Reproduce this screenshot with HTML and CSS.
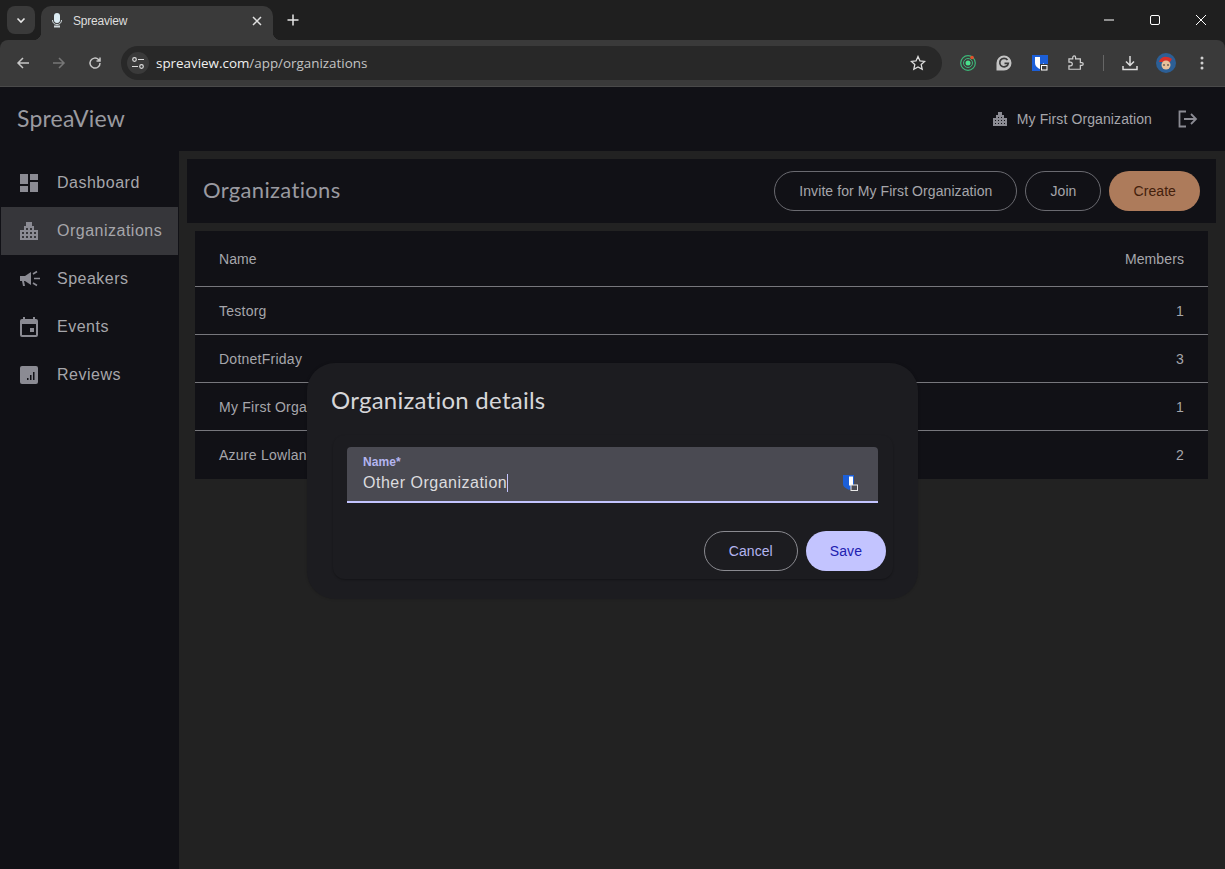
FILE: index.html
```html
<!DOCTYPE html>
<html lang="en">
<head>
    <meta charset="UTF-8">
    <title>Spreaview</title>
    <link rel="stylesheet" href="styles.css">
</head>
<body>
    <div class="browser">
        <div class="tabstrip">
            <div class="tab-search">
                <svg width="12" height="12" viewBox="0 0 12 12"><path d="M2.5 4.5 6 8l3.5-3.5" fill="none" stroke="#e6e6e6" stroke-width="1.6"/></svg>
            </div>
            <div class="tab">
                <svg class="tab-favicon" width="12" height="16" viewBox="0 0 12 16"><rect x="3" y="0" width="6" height="10" rx="3" fill="#dcecf4"/><path d="M1.5 7c0 3 2 4.500 4.500 4.500S10.500 10 10.500 7" fill="none" stroke="#cfd8dc"/><rect x="3" y="12.500" width="6" height="2" fill="#cfd8dc"/></svg>
                <span class="tab-title">Spreaview</span>
                <svg class="tab-close" width="10" height="10" viewBox="0 0 10 10"><path d="M1 1l8 8M9 1l-8 8" stroke="#e0e0e0" stroke-width="1.5"/></svg>
            </div>
            <svg class="new-tab" width="12" height="12" viewBox="0 0 12 12"><path d="M6 .5v11M.5 6h11" stroke="#e6e6e6" stroke-width="1.5"/></svg>
            <div class="window-controls">
                <svg width="10" height="10" viewBox="0 0 10 10"><path d="M0 5h10" stroke="#fff"/></svg>
                <svg width="10" height="10" viewBox="0 0 10 10"><rect x=".5" y=".5" width="9" height="9" rx="1.500" fill="none" stroke="#fff"/></svg>
                <svg width="10" height="10" viewBox="0 0 10 10"><path d="M0 0l10 10M10 0L0 10" stroke="#fff"/></svg>
            </div>
        </div>
        <div class="toolbar">
            <svg class="nav-icon" width="14" height="14" viewBox="0 0 14 14"><path d="M13 7H2M7 2 2 7l5 5" fill="none" stroke="#c7c7c7" stroke-width="1.500"/></svg>
            <svg class="nav-icon" width="14" height="14" viewBox="0 0 14 14"><path d="M1 7h11M7 2l5 5-5 5" fill="none" stroke="#777" stroke-width="1.500"/></svg>
            <svg class="nav-icon" width="14" height="14" viewBox="0 0 14 14"><path d="M12 7a5 5 0 1 1-1.500-3.500L12 5M12 1.500V5H8.500" fill="none" stroke="#c7c7c7" stroke-width="1.500"/></svg>
            <div class="omnibox">
                <div class="site-info">
                    <svg width="14" height="14" viewBox="0 0 14 14" fill="none" stroke="#dcdcdc" stroke-width="1.200"><circle cx="3.500" cy="3.500" r="1.800"/><path d="M7 3.500h6M1 10.500h6"/><circle cx="10.500" cy="10.500" r="1.800"/></svg>
                </div>
                <div class="url"><span class="url-host">spreaview.com</span>/app/organizations</div>
                <svg class="star" width="16" height="16" viewBox="0 0 16 16"><path d="M8 1.500l2 4.400 4.700.5-3.500 3.200 1 4.700L8 11.900l-4.200 2.400 1-4.700L1.300 6.400 6 5.900z" fill="none" stroke="#dedede" stroke-width="1.300"/></svg>
            </div>
            <div class="extensions">
                <svg width="16" height="16" viewBox="0 0 16 16" fill="none"><circle cx="8" cy="8" r="7.300" stroke="#3cb878" stroke-width="1.200"/><circle cx="8" cy="8" r="4.500" stroke="#3cb878"/><circle cx="8" cy="8" r="2.500" fill="#4be08c"/><circle cx="12" cy="2.500" r="1.800" fill="#e2522c"/></svg>
                <svg width="16" height="16" viewBox="0 0 16 16" fill="none"><path d="M8 .5a7.500 7.500 0 1 1 0 15H.5V8A7.500 7.500 0 0 1 8 .5z" fill="#c4c4c4"/><path d="M11.500 5A4.300 4.300 0 1 0 12.300 8.300H8.500" stroke="#3a3a3a" stroke-width="1.700"/></svg>
                <svg width="16" height="16" viewBox="0 0 16 16"><path d="M0 0h16v16H0z" fill="#1c5fd8"/><path d="M3 2h9v6c0 3-2 4.500-4.500 6C5 12.500 3 11 3 8z" fill="#fff"/><path d="M8 2h4v6l-4 3z" fill="#1c5fd8"/><rect x="8" y="9" width="8" height="7" fill="#3a3a3a"/><rect x="9.500" y="10.500" width="5.500" height="4.500" fill="none" stroke="#fff"/></svg>
                <svg width="16" height="16" viewBox="0 0 16 16"><path d="M1 4h4V2.500a1.500 1.500 0 0 1 3 0V4h5v4h1.500a1.500 1.500 0 0 1 0 3H13v4H1v-3.500h1.500a1.500 1.500 0 0 0 0-4H1z" fill="none" stroke="#d0d0d0" stroke-width="1.300" transform="scale(.95)"/></svg>
            </div>
            <div class="toolbar-sep"></div>
            <svg class="download" width="16" height="16" viewBox="0 0 16 16"><path d="M8 1v9M4 6.500 8 10.500l4-4M1 11v3.500h14V11" fill="none" stroke="#dcdcdc" stroke-width="1.500"/></svg>
            <svg class="avatar" width="20" height="20" viewBox="0 0 20 20"><circle cx="10" cy="10" r="10" fill="#2c5f96"/><path d="M3 9c1-5 7-7 13-3l-2 3z" fill="#d5302a"/><circle cx="10" cy="12" r="4.500" fill="#e8c09a"/><path d="M7 12h2M11 12h2" stroke="#333"/></svg>
            <svg class="menu" width="4" height="14" viewBox="0 0 4 14"><circle cx="2" cy="2" r="1.500" fill="#d0d0d0"/><circle cx="2" cy="7" r="1.500" fill="#d0d0d0"/><circle cx="2" cy="12" r="1.500" fill="#d0d0d0"/></svg>
        </div>
    </div>

    <div class="app">
        <header class="app-header">
            <div class="brand">SpreaView</div>
            <div class="org-switch">
                <svg width="14" height="14" viewBox="0 0 14 14"><path d="M0 14V6h3V3h2V0h4v3h2v3h3v8z" fill="#8b8b93"/><path d="M2 8h1v1H2zM2 11h1v1H2zM5 5h1v1H5zM8 5h1v1H8zM5 8h1v1H5zM8 8h1v1H8zM11 8h1v1h-1zM5 11h1v1H5zM8 11h1v1H8zM11 11h1v1h-1z" fill="#111116"/></svg>
                <span>My First Organization</span>
            </div>
            <svg class="logout" width="20" height="18" viewBox="0 0 20 18"><path d="M8 1.500H1.500v15H8M6 9h12M13 4l5 5-5 5" fill="none" stroke="#8b8b93" stroke-width="1.800"/></svg>
        </header>
        <div class="app-body">
            <nav class="sidebar">
                <a class="nav-item">
                    <svg width="18" height="18" viewBox="0 0 18 18"><path d="M0 0h8v10H0zM10 0h8v6h-8zM10 8h8v10h-8zM0 12h8v6H0z" fill="#8b8b93"/></svg>
                    Dashboard
                </a>
                <a class="nav-item active">
                    <svg width="18" height="18" viewBox="0 0 18 18"><path d="M0 18V8h4V4h2V0h6v4h2v4h4v10z" fill="#8b8b93"/><path d="M2 10h2v2H2zM2 14h2v2H2zM6 6h2v2H6zM10 6h2v2h-2zM6 10h2v2H6zM10 10h2v2h-2zM14 10h2v2h-2zM6 14h2v2H6zM10 14h2v2h-2zM14 14h2v2h-2z" fill="#36363a"/></svg>
                    Organizations
                </a>
                <a class="nav-item">
                    <svg class="wide-icon" width="20" height="18" viewBox="0 0 20 18"><path d="M0 6h5l6-4v13l-6-4H4l1 5H3l-1-5H0z" fill="#8b8b93"/><path d="M14 8.500h6M13 4l4-2.500M13 13l4 2.500" stroke="#8b8b93" stroke-width="1.600"/></svg>
                    Speakers
                </a>
                <a class="nav-item">
                    <svg width="18" height="20" viewBox="0 0 18 20"><path d="M3 0h2v2h8V0h2v2h1a2 2 0 0 1 2 2v14a2 2 0 0 1-2 2H2a2 2 0 0 1-2-2V4a2 2 0 0 1 2-2h1z" fill="#8b8b93"/><path d="M2 7h14v11H2z" fill="#111116"/><path d="M10 11h4v4h-4z" fill="#8b8b93"/></svg>
                    Events
                </a>
                <a class="nav-item">
                    <svg width="18" height="18" viewBox="0 0 18 18"><rect width="18" height="18" rx="2" fill="#8b8b93"/><path d="M7 12h1.500v2H7zM10 9h1.500v5H10zM13 6h1.500v8H13z" fill="#111116"/></svg>
                    Reviews
                </a>
            </nav>
            <main class="content">
                <div class="page-header">
                    <h1>Organizations</h1>
                    <div class="page-actions">
                        <button class="btn btn-outline">Invite for My First Organization</button>
                        <button class="btn btn-outline">Join</button>
                        <button class="btn btn-create">Create</button>
                    </div>
                </div>
                <table class="org-table">
                    <tr><th>Name</th><th class="num">Members</th></tr>
                    <tr><td>Testorg</td><td class="num">1</td></tr>
                    <tr><td>DotnetFriday</td><td class="num">3</td></tr>
                    <tr><td>My First Organization</td><td class="num">1</td></tr>
                    <tr class="last-row"><td>Azure Lowlands</td><td class="num">2</td></tr>
                </table>
            </main>
        </div>
    </div>

    <div class="dialog">
        <h2>Organization details</h2>
        <div class="dialog-body">
            <div class="field">
                <div class="field-label">Name*</div>
                <div class="field-value">Other Organization<span class="caret"></span></div>
                <svg class="field-icon" width="15" height="16" viewBox="0 0 15 16"><path d="M0 0h11v9c0 2-2 4-5 6-3-2-6-3-6-6z" fill="#1c5fd8"/><path d="M6 1.500h4v9H6z" fill="#fff"/><rect x="8" y="10" width="6.500" height="5.500" fill="#4a4a52" stroke="#e8e8e8"/></svg>
            </div>
            <div class="dialog-actions">
                <button class="btn btn-cancel">Cancel</button>
                <button class="btn btn-save">Save</button>
            </div>
        </div>
    </div>
</body>
</html>
```

FILE: styles.css
```css
html, body {
    margin: 0;
    padding: 0;
    height: 100%;
    overflow: hidden;
}
body {
    font-family: "Liberation Sans", Arial, sans-serif;
    background-color: #222222;
    color: #a6a6ab;
    display: flex;
    flex-direction: column;
}

/* browser chrome */
.browser {
    flex: none;
    height: 87px;
    background-color: #1f1f1f;
}
.tabstrip {
    height: 40px;
    display: flex;
    align-items: center;
    padding-left: 7px;
    box-sizing: border-box;
}
.tab-search {
    width: 28px;
    height: 28px;
    border-radius: 8px;
    background-color: #3a3a3a;
    display: flex;
    align-items: center;
    justify-content: center;
    margin-right: 6px;
}
.tab {
    width: 232px;
    height: 34px;
    margin-top: 6px;
    background-color: #3a3a3a;
    border-radius: 10px 10px 0 0;
    display: flex;
    align-items: center;
    padding: 0 11px 4px 10px;
    box-sizing: border-box;
    color: #dedede;
    font-size: 12px;
    letter-spacing: -0.2px;
    position: relative;
}
.tab::before, .tab::after {
    content: "";
    position: absolute;
    bottom: 0;
    width: 8px;
    height: 8px;
}
.tab::before {
    left: -8px;
    background: radial-gradient(circle at 0 0, transparent 8px, #3a3a3a 8.5px);
}
.tab::after {
    right: -8px;
    background: radial-gradient(circle at 100% 0, transparent 8px, #3a3a3a 8.5px);
}
.tab-favicon {
    margin-right: 10px;
}
.tab-title {
    flex: 1;
}
.new-tab {
    margin-left: 14px;
}
.window-controls {
    margin-left: auto;
    display: flex;
    gap: 36px;
    padding-right: 19px;
}
.toolbar {
    height: 47px;
    background-color: #3a3a3a;
    border-radius: 8px 8px 0 0;
    display: flex;
    align-items: center;
    padding: 0 0 0 16px;
    box-sizing: border-box;
    border-bottom: 1px solid #4a4a4a;
}
.nav-icon {
    margin-right: 22px;
}
.omnibox {
    width: 821px;
    height: 34px;
    margin-left: -3px;
    border-radius: 17px;
    background-color: #282828;
    display: flex;
    align-items: center;
    padding: 0 16px 0 6px;
    box-sizing: border-box;
}
.site-info {
    width: 22px;
    height: 22px;
    border-radius: 50%;
    background-color: #3a3a3a;
    display: flex;
    align-items: center;
    justify-content: center;
    margin-right: 7px;
}
.url {
    flex: 1;
    color: #c4c4c4;
    font-family: "Open Sans", sans-serif;
    font-size: 13.4px;
}
.url-host {
    color: #f0f0f0;
}
.extensions {
    display: flex;
    gap: 20px;
    margin-left: 18px;
}
.toolbar-sep {
    width: 1px;
    height: 16px;
    background-color: #666;
    margin: 0 18px 0 19px;
}
.download {
    margin-right: 18px;
}
.avatar {
    margin-right: 24px;
}

/* app */
.app {
    flex: 1;
    display: flex;
    flex-direction: column;
    min-height: 0;
}
.app-header {
    height: 64px;
    flex: none;
    background-color: #111116;
    display: flex;
    align-items: center;
    padding: 0 27px 0 17px;
}
.brand {
    font-family: Lato, sans-serif;
    font-size: 23px;
    letter-spacing: 0.2px;
    color: #9a9aa0;
    flex: 1;
    padding-bottom: 2px;
}
.org-switch {
    display: flex;
    align-items: center;
    gap: 10px;
    font-size: 14px;
    letter-spacing: 0.1px;
    margin-right: 26px;
}
.app-body {
    flex: 1;
    display: flex;
    min-height: 0;
}
.sidebar {
    width: 179px;
    flex: none;
    background-color: #111116;
    padding-top: 8px;
    box-sizing: border-box;
}
.nav-item {
    height: 48px;
    display: flex;
    align-items: center;
    gap: 19px;
    padding-left: 19px;
    font-size: 16px;
    letter-spacing: 0.5px;
    margin: 0 1px;
}
.nav-item svg {
    flex: none;
}
.nav-item .wide-icon {
    margin-right: -2px;
}
.nav-item.active {
    background-color: #36363a;
}
.content {
    flex: 1;
    padding: 8px 9px 8px 8px;
    box-sizing: border-box;
}
.page-header {
    height: 64px;
    background-color: #111116;
    display: flex;
    align-items: center;
    justify-content: space-between;
    padding: 0 16px;
}
.page-header h1 {
    margin: 0 0 3px;
    font-family: Lato, sans-serif;
    font-weight: 400;
    font-size: 22px;
    letter-spacing: 0.33px;
    color: #9a9aa0;
}
.page-actions {
    display: flex;
    gap: 8px;
}
.btn {
    height: 40px;
    border-radius: 20px;
    font-family: "Liberation Sans", Arial, sans-serif;
    font-size: 14px;
    letter-spacing: 0.08px;
    padding: 0 24px;
    background: none;
    border: 1px solid #6a6a70;
    color: #a6a6ab;
}
.btn-create {
    background-color: #ad7b5b;
    border: none;
    color: #43200b;
}
.org-table {
    width: calc(100% - 16px);
    margin: 8px 8px 0;
    border-collapse: separate;
    border-spacing: 0;
    background-color: #111116;
    font-size: 14px;
    letter-spacing: 0.25px;
}
.org-table th, .org-table td {
    height: 48px;
    padding: 0 24px;
    text-align: left;
    font-weight: 400;
    box-sizing: border-box;
    border-bottom: 1px solid #77777c;
}
.org-table th {
    height: 56px;
    letter-spacing: 0.1px;
}
.org-table .last-row td {
    border-bottom: none;
}
.org-table .num {
    text-align: right;
}

/* dialog */
.dialog {
    position: absolute;
    left: 307px;
    top: 363px;
    width: 611px;
    height: 236px;
    background-color: #1c1c20;
    border-radius: 28px;
    box-sizing: border-box;
    padding: 24px 24px 20px;
    display: flex;
    flex-direction: column;
    box-shadow: 0 0 3px rgba(0, 0, 0, 0.2);
}
.dialog h2 {
    margin: -1px 0 1px;
    font-family: Lato, sans-serif;
    font-weight: 400;
    font-size: 24px;
    letter-spacing: 0.25px;
    line-height: 28px;
    color: #d6d6d9;
}
.dialog-body {
    margin: 20px 1px 0 2px;
    padding: 12px 7px 8px 14px;
    flex: 1;
    border-radius: 12px;
    box-shadow: 0 1px 2px rgba(0, 0, 0, 0.3);
}
.field {
    height: 56px;
    width: 531px;
    box-sizing: border-box;
    background-color: #4a4a52;
    border-bottom: 2px solid #c3c4ff;
    border-radius: 4px 4px 0 0;
    padding: 8px 16px 0;
    position: relative;
}
.field-label {
    font-size: 12px;
    font-weight: 700;
    letter-spacing: 0.1px;
    line-height: 14px;
    color: #b4b5f0;
}
.field-value {
    font-size: 16px;
    letter-spacing: 0.5px;
    line-height: 24px;
    margin-top: 2px;
    color: #dcdcdf;
    display: flex;
    align-items: center;
}
.caret {
    width: 1px;
    height: 18px;
    background-color: #c3c4ff;
}
.field-icon {
    position: absolute;
    right: 20px;
    top: 28px;
}
.dialog-actions {
    display: flex;
    justify-content: flex-end;
    gap: 8px;
    margin-top: 28px;
}
.btn-cancel {
    color: #b4b5f0;
    border-color: #8a8a90;
}
.btn-save {
    background-color: #c3c4ff;
    border: none;
    color: #2020b0;
}
```
